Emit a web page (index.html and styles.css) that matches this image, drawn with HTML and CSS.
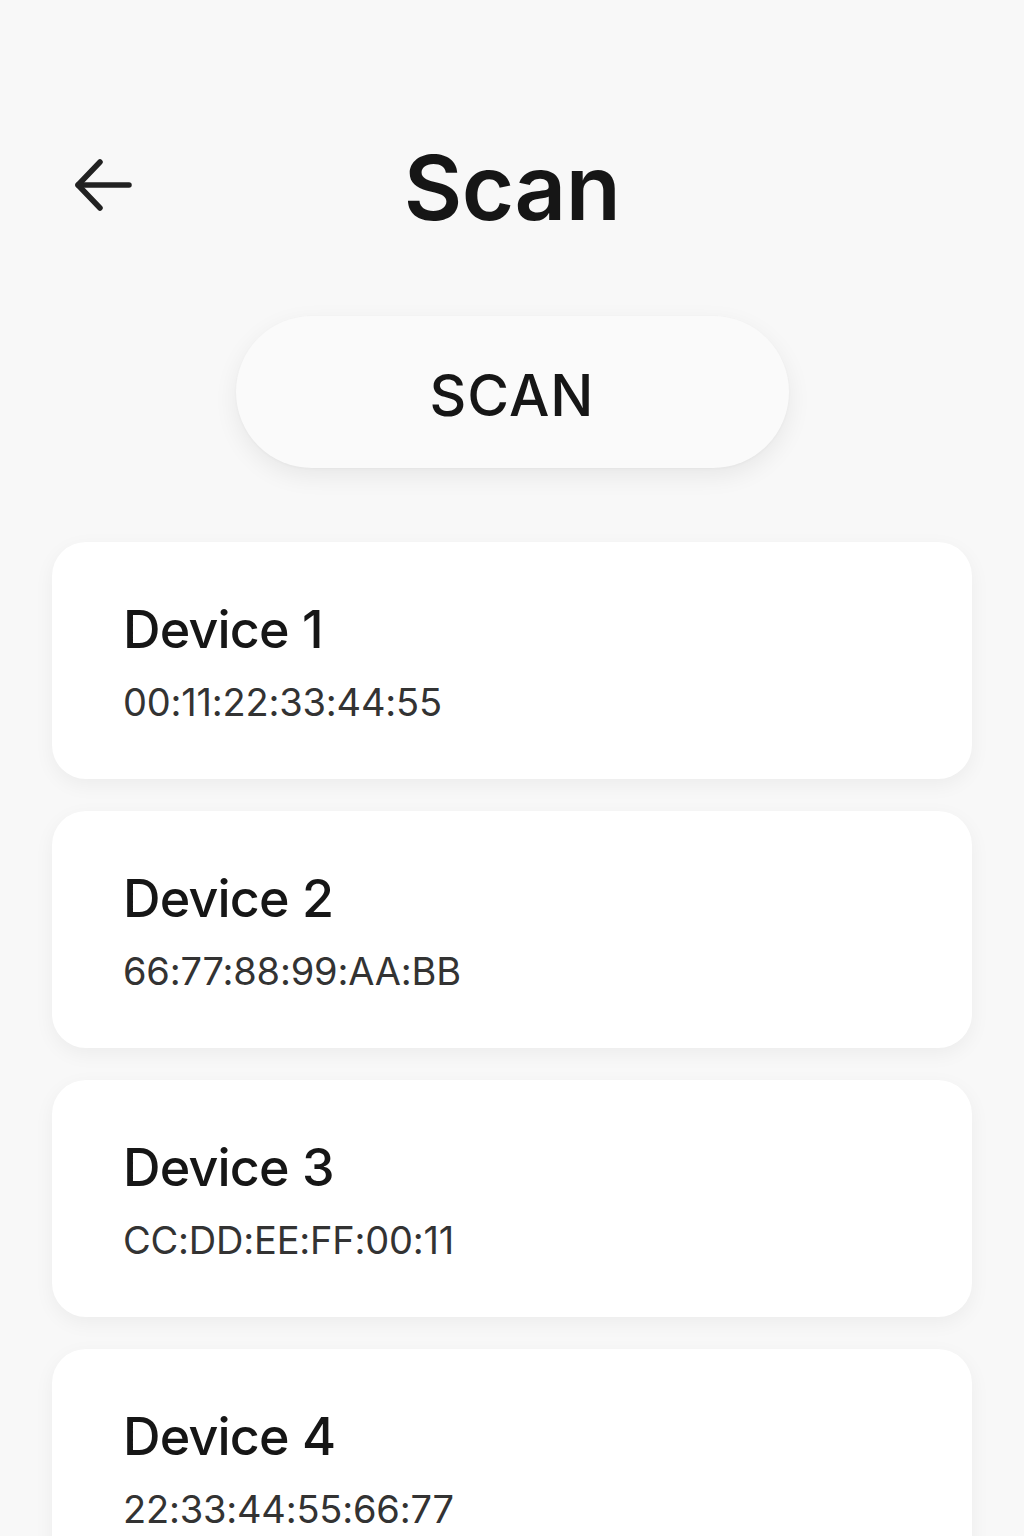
FILE: index.html
```html
<!DOCTYPE html>
<html lang="en">
<head>
<meta charset="utf-8">
<title>Scan</title>
<link rel="stylesheet" href="styles.css">
</head>
<body>
<div class="screen">
  <header class="header">
    <button class="back" aria-label="Back">
      <svg width="60" height="60" viewBox="0 0 60 60" fill="none" stroke="#222" stroke-width="5.5" stroke-linecap="round" stroke-linejoin="round">
        <path d="M55 29H4"/>
        <path d="M26 6L4 29L26 52"/>
      </svg>
    </button>
    <h1 class="title">Scan</h1>
  </header>
  <div class="action">
    <button class="scan-btn">SCAN</button>
  </div>
  <ul class="devices">
    <li class="card"><div class="name">Device 1</div><div class="mac">00:11:22:33:44:55</div></li>
    <li class="card"><div class="name">Device 2</div><div class="mac">66:77:88:99:AA:BB</div></li>
    <li class="card"><div class="name">Device 3</div><div class="mac">CC:DD:EE:FF:00:11</div></li>
    <li class="card"><div class="name">Device 4</div><div class="mac">22:33:44:55:66:77</div></li>
  </ul>
</div>
</body>
</html>
```
FILE: styles.css
```css
* { box-sizing: border-box; }
html, body {
  margin: 0;
  padding: 0;
  background: #f8f8f8;
  font-family: Inter, "Noto Sans", sans-serif;
  color: #161616;
}
.screen {
  width: 1024px;
  height: 1536px;
  overflow: hidden;
  padding: 0 52px 0 52px;
}
.header {
  position: relative;
  height: 270px;
  padding-top: 128px;
  display: flex;
  justify-content: center;
}
.back {
  position: absolute;
  left: 22px;
  top: 156px;
  background: none;
  border: none;
  padding: 0;
  width: 60px;
  height: 60px;
  cursor: pointer;
}
.back svg { display: block; }
.title {
  margin: 0;
  font-size: 90px;
  font-weight: 600;
  line-height: 120px;
  letter-spacing: -0.5px;
}
.action {
  display: flex;
  justify-content: center;
  padding-top: 46px;
}
.scan-btn {
  width: 553px;
  height: 152px;
  padding: 6px 0 0 0;
  border: none;
  border-radius: 76px;
  background: #fafafa;
  box-shadow: 0 8px 24px rgba(0,0,0,0.07), 0 1px 3px rgba(0,0,0,0.03);
  font-family: Inter, "Noto Sans", sans-serif;
  font-size: 57px;
  font-weight: 500;
  color: #161616;
  letter-spacing: 1px;
}
.devices {
  list-style: none;
  margin: 74px 0 0 0;
  padding: 0;
  display: flex;
  flex-direction: column;
  gap: 32px;
}
.card {
  background: #fff;
  border-radius: 34px;
  height: 237px;
  padding: 56px 0 0 71px;
  box-shadow: 0 6px 20px rgba(0,0,0,0.05);
  flex-shrink: 0;
}
.name {
  font-size: 52px;
  font-weight: 500;
  line-height: 64px;
  color: #161616;
  letter-spacing: -0.8px;
}
.mac {
  margin-top: 16px;
  font-size: 38px;
  font-weight: 400;
  line-height: 48px;
  color: #333;
  letter-spacing: -0.2px;
}
```
